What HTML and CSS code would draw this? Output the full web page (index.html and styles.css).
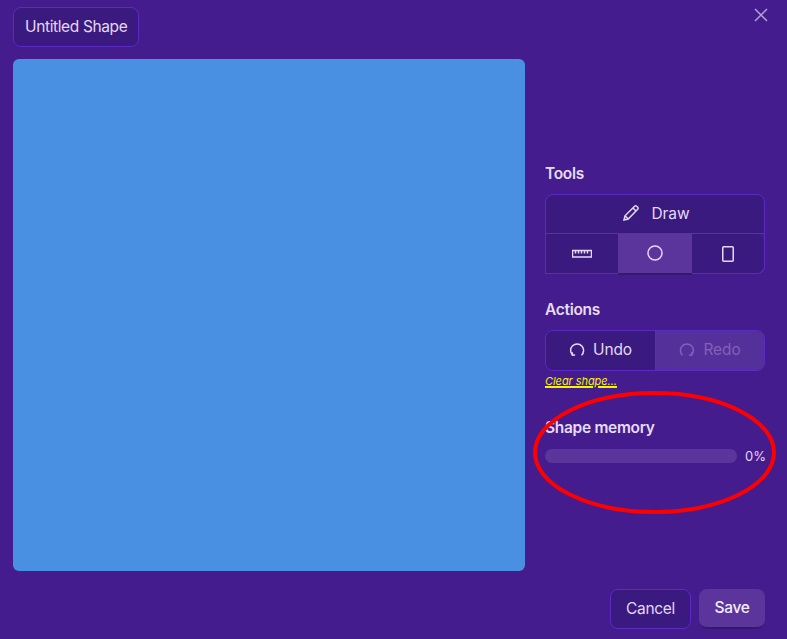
FILE: index.html
```html
<!DOCTYPE html>
<html lang="en">
<head>
<meta charset="utf-8">
<title>Untitled Shape</title>
<link rel="stylesheet" href="styles.css">
</head>
<body>
<div class="dialog">
  <button class="close" aria-label="Close"><svg width="14" height="14" viewBox="0 0 14 14"><path d="M1 1L13 13M13 1L1 13" class="ln"/></svg></button>
  <div class="title-row"><div class="title">Untitled Shape</div></div>
  <div class="main">
    <div class="canvas"></div>
    <aside class="side">
      <section class="group tools">
        <h3>Tools</h3>
        <div class="seg-stack">
          <button class="tbtn draw">
            <svg width="18" height="18" viewBox="0 0 18 18"><path class="ln" d="M2 16l1-4.200L12.600 2.200a1.500 1.500 0 0 1 2.100 0l1 1a1.500 1.500 0 0 1 0 2.100L6.200 15zM11 4l3 3M3 11.800L6.200 15"/></svg>
            <span>Draw</span>
          </button>
          <div class="tool-row">
            <button class="tbtn"><svg width="20" height="10" viewBox="0 0 20 10"><path class="ln" d="M.5 1.500h19v6.500h-19zM3.500 1.500v3M6.500 1.500v3M9.500 1.500v3M12.500 1.500v3M15.500 1.500v3"/></svg></button>
            <button class="tbtn on"><svg width="16" height="16" viewBox="0 0 16 16"><circle class="ln" cx="8" cy="8" r="7"/></svg></button>
            <button class="tbtn last"><svg width="12" height="16" viewBox="0 0 12 16"><rect class="ln" x=".75" y=".75" width="10.500" height="14.500" rx="1"/></svg></button>
          </div>
        </div>
      </section>
      <section class="group actions">
        <h3>Actions</h3>
        <div class="undo-row">
          <button class="tbtn undo"><svg width="16" height="16" viewBox="0 0 16 16"><path class="ln" d="M3.500 13A6.500 6.500 0 1 1 12.500 13.200"/><path class="ln" d="M3.300 10.400l.2 2.800 2.600-.3"/></svg><span>Undo</span></button>
          <button class="tbtn redo"><svg width="16" height="16" viewBox="0 0 16 16"><path class="ln" d="M3.500 13.200A6.500 6.500 0 1 1 12.500 13"/><path class="ln" d="M12.700 10.400l-.2 2.800-2.600-.3"/></svg><span>Redo</span></button>
        </div>
        <a class="clear" href="#">Clear shape...</a>
      </section>
      <section class="group memory">
        <h3>Shape memory</h3>
        <div class="meter"><div class="track"></div><span>0%</span></div>
      </section>
    </aside>
  </div>
  <footer class="foot">
    <button class="cancel">Cancel</button>
    <button class="save">Save</button>
  </footer>
  <svg class="mark" width="244" height="124" viewBox="0 0 244 124"><ellipse cx="121.500" cy="61.500" rx="119.500" ry="59.500"/></svg>
</div>
</body>
</html>
```
FILE: styles.css
```css
* { box-sizing: border-box; }
html, body { margin: 0; height: 100%; }
body {
  background: #451c8d;
  color: #e3d9f6;
  font-family: Inter, "Liberation Sans", sans-serif;
  overflow: hidden;
}
button { font: inherit; color: inherit; cursor: pointer; }
.ln { fill: none; stroke: currentColor; stroke-width: 1.500; }
.dialog {
  position: relative;
  width: 787px;
  height: 639px;
  padding: 7px 22px 10px 13px;
}
.close {
  position: absolute;
  top: 8px;
  right: 19px;
  display: flex;
  padding: 0;
  background: none;
  border: 0;
  color: #b3a2d6;
}
.title-row { display: flex; height: 52px; }
.title {
  width: 126px;
  height: 40px;
  padding: 0 0 2px 11px;
  display: flex;
  align-items: center;
  font-size: 15.500px;
  letter-spacing: -.37px;
  white-space: nowrap;
  color: #e3d9f6;
  background: #3a1a7e;
  border: 1px solid #5a2bc4;
  border-radius: 8px;
}
.main { display: flex; gap: 20px; height: 530px; }
.canvas {
  width: 512px;
  height: 512px;
  background: #4a90e2;
  border-radius: 6px;
}
.side { width: 220px; padding-top: 105px; }
.group h3 {
  margin: 0;
  font-size: 15.500px;
  line-height: 20px;
  font-weight: 600;
  letter-spacing: -.3px;
  color: #e5dcf7;
}
.tools { height: 136px; }
.actions { height: 118px; }
.seg-stack { margin-top: 10px; }
.tbtn {
  display: flex;
  align-items: center;
  justify-content: center;
  gap: 12px;
  padding: 0 0 2px;
  height: 40px;
  background: #3a1a7e;
  border: 0;
  font-size: 15.500px;
  color: #e3d9f6;
}
.draw {
  width: 100%;
  padding-left: 2px;
  gap: 11px;
  border: 1px solid #5a2bc4;
  border-radius: 8px 8px 0 0;
  letter-spacing: -.1px;
}
.tool-row {
  display: grid;
  grid-template-columns: 72px 74px 72px;
  height: 40px;
  border-bottom: 1px solid #5a2bc4;
  border-left: 1px solid #5a2bc4;
  border-right: 1px solid #5a2bc4;
  border-radius: 0 0 8px 0;
}
.tool-row .tbtn { height: 39px; width: auto; padding: 0; }
.tool-row .on {
  background: #5c359c;
  height: 41px;
  padding: 0 0 2px;
  border-bottom: 2px solid #351a6b;
}
.tool-row .last { border-radius: 0 8px 8px 0; }
.actions .undo-row {
  display: grid;
  grid-template-columns: 110px 108px;
  height: 41px;
  margin-top: 10px;
  border: 1px solid #5a2bc4;
  border-radius: 8px;
  overflow: hidden;
}
.undo-row .tbtn { gap: 8px; height: 39px; letter-spacing: -.1px; }
.undo { border-right: 1px solid #5a2bc4; }
.redo { background: #54309a; color: #7f62b6; }
.clear {
  display: block;
  margin-top: 2px;
  font-size: 11px;
  line-height: 16px;
  font-style: italic;
  letter-spacing: -.05px;
  color: #f5f500;
  text-decoration: underline;
  text-decoration-thickness: 1.500px;
}
.meter { display: flex; align-items: center; gap: 8px; margin-top: 11px; }
.track { flex: none; width: 192px; height: 14px; border-radius: 7px; background: #5c359c; }
.meter span { font-size: 13px; line-height: 14px; color: #e3d9f6; }
.foot { display: flex; justify-content: flex-end; gap: 8px; }
.cancel, .save {
  height: 40px;
  border-radius: 8px;
  font-size: 15.500px;
  letter-spacing: -.3px;
  padding: 0 0 2px;
}
.cancel { width: 81px; background: #3a1a7e; border: 1px solid #5a2bc4; color: #e3d9f6; }
.save {
  width: 66px;
  background: #5c359c;
  border: 0;
  border-bottom: 2px solid #351a6b;
  color: #f3eefc;
  font-weight: 500;
}
.mark { position: absolute; left: 533px; top: 391px; }
.mark ellipse { fill: none; stroke: #ff0000; stroke-width: 4; }
```
